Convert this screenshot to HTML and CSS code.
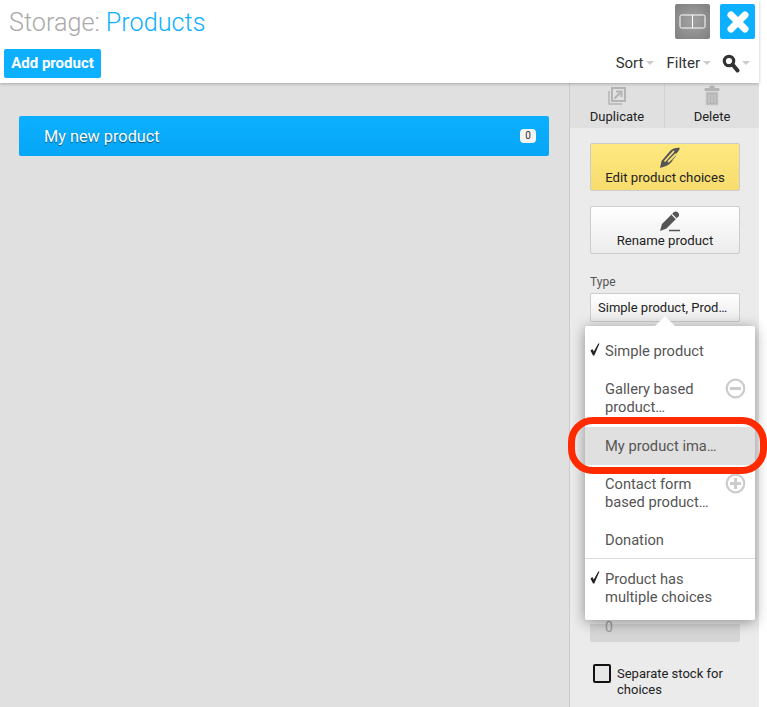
FILE: index.html
```html
<!DOCTYPE html>
<html lang="en">
<head>
<meta charset="utf-8">
<title>Storage: Products</title>
<link rel="stylesheet" href="styles.css">
</head>
<body>
<div class="app">
  <header class="header">
    <div class="title-row">
      <h1 class="title"><span class="title-muted">Storage:</span> <span class="title-accent">Products</span></h1>
      <div class="window-tools">
        <button class="tool tool-layout" aria-label="Layout"><svg width="27" height="15" viewBox="0 0 27 15"><rect x="1" y="1" width="25" height="13" rx="1.5" fill="none" stroke="#fff" stroke-width="1"/><path d="M13.5 1v13" stroke="#fff" stroke-width="1"/></svg></button>
        <button class="tool tool-close" aria-label="Close"><svg width="26" height="26" viewBox="0 0 26 26"><path d="M6 6l14 14M20 6L6 20" stroke="#fff" stroke-width="7" stroke-linecap="round"/></svg></button>
      </div>
    </div>
    <div class="action-row">
      <button class="add-btn">Add product</button>
      <div class="list-tools">
        <span class="list-tool sort">Sort<i class="caret"></i></span>
        <span class="list-tool">Filter<i class="caret"></i></span>
        <span class="list-tool search"><svg width="18" height="20" viewBox="0 0 18 20"><circle cx="7" cy="7" r="4.700" fill="none" stroke="#333" stroke-width="3.200"/><path d="M10.500 10.500l5 6" stroke="#333" stroke-width="4" stroke-linecap="round"/></svg><i class="caret"></i></span>
      </div>
    </div>
  </header>
  <div class="content">
    <main class="list">
      <div class="product-row"><span>My new product</span><span class="count">0</span></div>
    </main>
    <aside class="sidebar">
      <div class="tabs">
        <div class="tab">
          <svg width="20" height="20" viewBox="0 0 20 20"><path d="M5 2h13v13h-13z" fill="none" stroke="#b4b4b4" stroke-width="2"/><path d="M2 5v13h13" fill="none" stroke="#b4b4b4" stroke-width="1.500"/><path d="M7.500 12.500l5.500-5.500M9 5.500h5.500v5.500" fill="none" stroke="#b4b4b4" stroke-width="2"/></svg>
          <span>Duplicate</span>
        </div>
        <div class="tab">
          <svg width="16" height="21" viewBox="0 0 16 21"><path d="M1 3.500h14v2h-14zM5.500 3l1-2h3l1 2" fill="#b4b4b4" stroke="#b4b4b4" stroke-width="1"/><path d="M2 7h12v13h-12zM5 9v9M8 9v9M11 9v9" fill="#b4b4b4" stroke="#cfcfcf" stroke-width="1"/></svg>
          <span>Delete</span>
        </div>
      </div>
      <div class="panel">
        <button class="big-btn big-btn-yellow">
          <svg class="btn-icon" width="22" height="22" viewBox="0 0 22 22"><path d="M1 21l1.500-7 8.500-10c3-3 7-3.500 10-3-1 2-1.500 3.500-3 5l-2 1.500 1.500-.5c-.5 2-1.500 3.500-3 5l-1.500 1.200 1-.2c-1.500 2.500-4 5-7 6z" fill="#555"/><path d="M5.500 14.500L15 4M9 15L17 7" stroke="#f9e27a" stroke-width="1.800"/></svg>
          <span>Edit product choices</span>
        </button>
        <button class="big-btn">
          <svg class="btn-icon" width="22" height="22" viewBox="0 0 22 22"><path d="M1 21l2-7L14.500 2.500c1.500-1.500 3-1.500 4.500 0s1.500 3 0 4.500L7.500 18.500z" fill="#555"/><path d="M13 4.500l5 5" stroke="#f6f6f6" stroke-width="1.200"/><path d="M10 20.500h11" stroke="#555" stroke-width="1.500"/></svg>
          <span>Rename product</span>
        </button>
        <label class="field-label">Type</label>
        <div class="select">Simple product, Prod…</div>
        <div class="stock-input">0</div>
        <label class="check-row"><span class="checkbox"></span><span class="check-text">Separate stock for choices</span></label>
      </div>
    </aside>
  </div>
  <div class="menu">
    <div class="menu-item"><svg class="check" width="10" height="13" viewBox="0 0 10 13"><path d="M0.500 7.500L2.300 6l1.500 2.500L8.300 0.500h1.200L4.300 12.500h-1.300z" fill="#222"/></svg>Simple product</div>
    <div class="menu-item gallery">Gallery based product…
      <svg class="round-icon" width="21" height="21" viewBox="0 0 21 21"><circle cx="10.500" cy="10.500" r="8.800" fill="none" stroke="#ccc" stroke-width="2.200"/><path d="M5 10.500h11" stroke="#ccc" stroke-width="3"/></svg>
    </div>
    <div class="menu-item active">My product ima…</div>
    <div class="menu-item">Contact form based product…
      <svg class="round-icon" width="21" height="21" viewBox="0 0 21 21"><circle cx="10.500" cy="10.500" r="8.800" fill="none" stroke="#ccc" stroke-width="2.200"/><path d="M5 10.500h11M10.500 5v11" stroke="#ccc" stroke-width="3"/></svg>
    </div>
    <div class="menu-item donation">Donation</div>
    <div class="menu-sep"></div>
    <div class="menu-item"><svg class="check" width="10" height="13" viewBox="0 0 10 13"><path d="M0.500 7.500L2.300 6l1.500 2.500L8.300 0.500h1.200L4.300 12.500h-1.300z" fill="#222"/></svg>Product has multiple choices</div>
  </div>
  <div class="highlight"></div>
</div>
</body>
</html>
```
FILE: styles.css
```css
* { box-sizing: border-box; }
html, body { margin: 0; height: 707px; overflow: hidden; background: #fff; }
body { font-family: Roboto, "Liberation Sans", sans-serif; color: #222; }
button { font-family: inherit; border: 0; padding: 0; }

.app { position: relative; width: 759px; height: 707px; display: flex; flex-direction: column; }

.header { height: 83px; flex: none; background: #fff; box-shadow: 0 1px 3px rgba(0,0,0,.25); position: relative; z-index: 2; padding: 4px 4px 0; }
.title-row { display: flex; justify-content: space-between; align-items: flex-start; height: 45px; }
.title { margin: 4px 0 0 5px; font-size: 25.200px; line-height: 30px; font-weight: 300; }
.title-muted { color: #aaa; }
.title-accent { color: #0cb0ff; }
.window-tools { display: flex; gap: 10px; }
.tool { width: 35px; height: 35px; border-radius: 2px; display: flex; align-items: center; justify-content: center; }
.tool-layout { background: radial-gradient(circle, #a3a3a3 0%, #7f7f7f 100%); }
.tool-close { background: #0cb0ff; }

.action-row { display: flex; justify-content: space-between; align-items: center; height: 29px; }
.add-btn { width: 97px; height: 29px; padding-bottom: 2px; background: #0cb0ff; color: #fff; font-size: 15px; font-weight: 700; border-radius: 2px; }
.list-tools { display: flex; align-items: center; font-size: 15px; color: #333; padding-bottom: 2px; }
.list-tool { display: flex; align-items: center; gap: 2px; margin-right: 11px; }
.list-tool.sort { margin-right: 12px; }
.list-tool.search { margin-right: 5px; gap: 1px; }
.search svg { margin-top: 3px; }
.caret { width: 0; height: 0; border: 4.500px solid transparent; border-top-color: #ccc; border-bottom: 0; margin-left: 1px; }

.content { flex: 1; display: flex; min-height: 0; }
.list { width: 570px; flex: none; background: #e0e0e0; border-right: 1px solid #ccc; padding: 33px 20px 0 19px; }
.product-row { height: 40px; display: flex; align-items: center; justify-content: space-between; padding: 0 13px 0 25px; border-radius: 2px; background: linear-gradient(#0cb0ff, #06a6f6); color: #fff; font-size: 16.300px; text-shadow: 0 1px 1px rgba(0,0,0,.55); }
.count { min-width: 16px; height: 14px; line-height: 14px; border-radius: 4px; background: #f4f4f4; color: #333; font-size: 10px; text-align: center; text-shadow: none; }

.sidebar { flex: 1; display: flex; flex-direction: column; background: #ebebeb; }
.tabs { display: flex; height: 45px; background: #e0e0e0; }
.tab { flex: 1; display: flex; flex-direction: column; align-items: center; justify-content: flex-end; gap: 3px; padding-bottom: 4px; font-size: 13px; color: #222; }
.tab + .tab { border-left: 1px solid #d2d2d2; }
.panel { display: flex; flex-direction: column; padding: 15px 19px 0 20px; }
.big-btn { height: 48px; display: flex; flex-direction: column; align-items: center; justify-content: flex-start; padding-top: 3px; gap: 1px; border: 1px solid #ccc; border-radius: 2px; background: linear-gradient(#fff, #ececec); font-size: 13.200px; color: #222; line-height: 15px; margin-bottom: 15px; }
.btn-icon { margin-left: 9px; flex: none; }
.big-btn-yellow { background: linear-gradient(#ffe980, #f7dc6e); }
.field-label { font-size: 12px; color: #555; margin-top: 6px; line-height: 14px; }
.select { height: 29px; margin-top: 4px; border: 1px solid #ccc; border-radius: 2px; background: linear-gradient(#fff, #ececec); font-size: 13px; line-height: 27px; padding-left: 7px; color: #222; }
.stock-input { margin-top: 302px; height: 18px; background: #d6d6d6; border-radius: 0 0 2px 2px; font-size: 14px; color: #999; padding-left: 15px; line-height: 6px; }
.check-row { display: flex; gap: 6px; margin-top: 22px; margin-left: 3px; font-size: 13px; line-height: 16px; color: #222; }
.check-text { margin-top: 2px; }
.checkbox { width: 18px; height: 19px; flex: none; border: 2.500px solid #111; border-radius: 2px; background: #e6e6e6; }

.menu { position: absolute; left: 585px; top: 326px; width: 170px; height: 294px; z-index: 3; background: #fff; border-radius: 2px; box-shadow: 0 2px 14px rgba(0,0,0,.4); padding-top: 6px; font-size: 14.700px; line-height: 18px; color: #555; }
.menu::before { content: ""; position: absolute; left: 73px; top: -7px; width: 14px; height: 14px; background: #fff; transform: rotate(45deg); }
.menu-item { position: relative; padding: 10px 38px 10px 20px; }
.menu-item.gallery { margin-bottom: 1px; }
.menu-item.donation { padding-bottom: 9px; }
.menu-item.active { background: #e0e0e0; }
.check { position: absolute; left: 5px; top: 11px; }
.menu-sep { height: 1px; background: #ddd; margin-bottom: 1px; }
.round-icon { position: absolute; right: 9px; top: 8px; }

.highlight { position: absolute; left: 568px; top: 417px; width: 199px; height: 57px; z-index: 4; border: 7px solid #ff2a00; border-radius: 25px; }
```
